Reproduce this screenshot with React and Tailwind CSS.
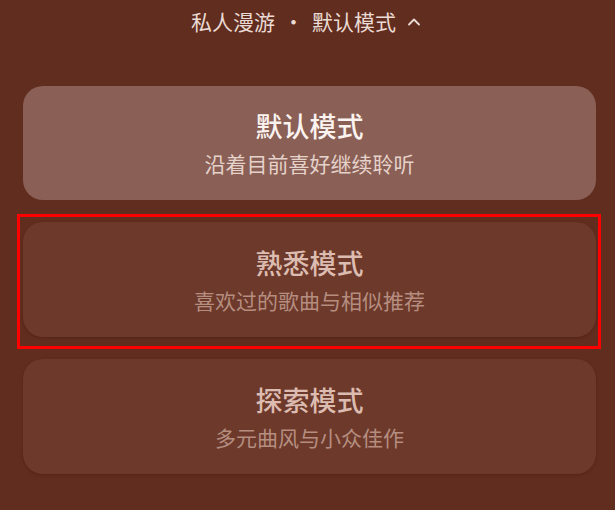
import { ChevronUp } from 'lucide-react'

const modes = [
  { title: '默认模式', desc: '沿着目前喜好继续聆听', active: true },
  { title: '熟悉模式', desc: '喜欢过的歌曲与相似推荐', marked: true },
  { title: '探索模式', desc: '多元曲风与小众佳作' },
]

function ModeCard({ title, desc, active, marked }) {
  return (
    <div className="relative">
      {marked ? (
        <div className="pointer-events-none absolute -top-[8px] -bottom-[12px] -left-[6px] -right-[5px] border-[3px] border-[#ff0000]" />
      ) : null}
      <div
        className={
          active
            ? 'flex h-[114px] flex-col items-center justify-center rounded-[20px] bg-[#8a5f55]'
            : 'flex h-[115px] flex-col items-center justify-center rounded-[20px] bg-[#6d392b] shadow-[0_1px_3px_rgba(40,10,0,0.25)]'
        }
      >
        <p
          className={
            active
              ? 'text-[27px] font-medium leading-[34px] text-[#fbf3ef]'
              : 'text-[27px] font-medium leading-[34px] text-[#dcbcb0]'
          }
        >
          {title}
        </p>
        <p
          className={
            active
              ? 'mt-[6px] text-[21px] leading-[28px] text-[#e5d2ca]'
              : 'mt-[6px] text-[21px] leading-[28px] text-[#b58e80]'
          }
        >
          {desc}
        </p>
      </div>
    </div>
  )
}

export default function App() {
  return (
    <div
      className="h-[510px] w-[615px] overflow-hidden bg-[#612d1f]"
      style={{ fontFamily: '"Noto Sans CJK SC", "Noto Sans", sans-serif' }}
    >
      <div className="flex h-[44px] items-center justify-center text-[21px] text-[#eadbd4]">
        <span>私人漫游</span>
        <span className="mx-[8px]">·</span>
        <span>默认模式</span>
        <ChevronUp className="ml-[8px] h-[20px] w-[20px]" strokeWidth={2.2} />
      </div>
      <div className="flex flex-col gap-[22px] pl-[23px] pr-[19px] pt-[42px]">
        {modes.map((mode) => (
          <ModeCard key={mode.title} {...mode} />
        ))}
      </div>
    </div>
  )
}
